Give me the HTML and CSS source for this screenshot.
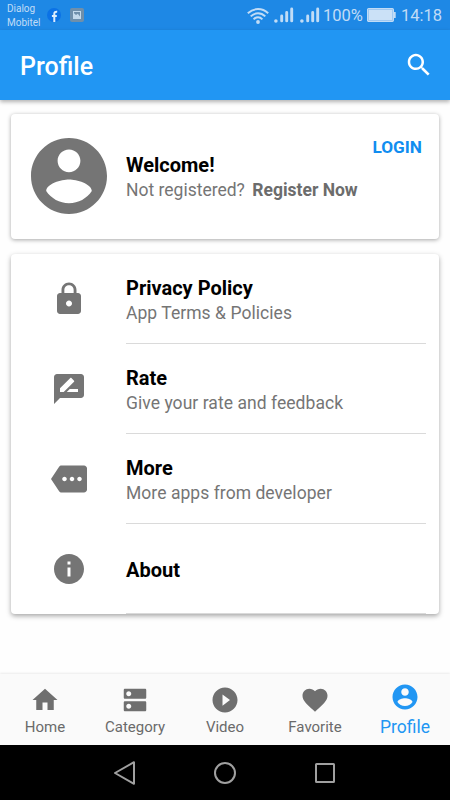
FILE: index.html
```html
<!DOCTYPE html>
<html lang="en">
<head>
    <meta charset="UTF-8">
    <meta name="viewport" content="width=device-width, initial-scale=1.0">
    <title>Profile</title>
    <link rel="stylesheet" href="styles.css">
</head>
<body>

<div class="status-bar">
    <div class="carrier">Dialog<br>Mobitel</div>
    <svg class="status-fb" viewBox="0 0 14 14">
        <circle cx="7" cy="7" r="7" fill="#0b72e6"/>
        <path d="M7.3 14V5.800Q7.300 3.500 10.200 3.800M4.900 8.100h4.900" fill="none" stroke="#dcecfc" stroke-width="2"/>
    </svg>
    <svg class="status-pic" viewBox="0 0 14 14">
        <rect width="14" height="14" rx="2" fill="#6f8fab"/>
        <rect x="3" y="3" width="8" height="8" fill="#c3d9ec"/>
        <path d="M4 4h6v4.500L7.800 5.800 6 7 4 5.200z" fill="#6f8fab"/>
    </svg>
    <div class="status-right">
        <svg class="wifi" viewBox="0 0 22 17">
            <g fill="none" stroke="#c1dcf6" stroke-width="2">
                <path d="M.8 6.200Q5.400 2 11 2t10.200 4.200"/>
                <path d="M3.700 9.400Q7 6.200 11 6.200t7.300 3.200"/>
                <path d="M6.600 12.400Q8.600 10.300 11 10.300t4.400 2.100"/>
            </g>
            <circle cx="11" cy="15" r="1.900" fill="#c1dcf6"/>
        </svg>
        <svg class="signal" viewBox="0 0 20 16">
            <path d="M1.900 14v0" stroke="#c1dcf6" stroke-width="3.600" stroke-linecap="round"/>
            <path d="M7.700 13.900V9M12.700 13.900V5.500M17.700 13.900V1.900" stroke="#c1dcf6" stroke-width="2.900" stroke-linecap="round"/>
        </svg>
        <svg class="signal second" viewBox="0 0 20 16">
            <path d="M1.900 14v0" stroke="#c1dcf6" stroke-width="3.600" stroke-linecap="round"/>
            <path d="M7.700 13.900V9M12.700 13.900V5.500M17.700 13.900V1.900" stroke="#c1dcf6" stroke-width="2.900" stroke-linecap="round"/>
        </svg>
        <span class="percent">100%</span>
        <svg class="battery" viewBox="0 0 29 14">
            <rect x=".7" y=".7" width="25.600" height="12.600" rx="1" fill="#cbe1f7" stroke="#c1dcf6" stroke-width="1.400"/>
            <rect x="1.600" y="1.600" width="23.800" height="10.800" fill="none" stroke="#8fbff0" stroke-width=".7"/>
            <rect x="27" y="4" width="1.700" height="6" fill="#c1dcf6"/>
        </svg>
        <span class="time">14:18</span>
    </div>
</div>

<header class="app-bar">
    <h1>Profile</h1>
    <svg class="search" viewBox="0 0 24 24"><path d="M15.500 14h-.79l-.28-.27C15.410 12.590 16 11.110 16 9.500 16 5.910 13.090 3 9.500 3S3 5.910 3 9.500 5.910 16 9.500 16c1.610 0 3.090-.59 4.230-1.570l.27.28v.79l5 4.990L20.490 19l-4.990-5zm-6 0C7.010 14 5 11.990 5 9.500S7.010 5 9.500 5 14 7.010 14 9.500 11.990 14 9.500 14z"/></svg>
</header>

<main>
    <!-- User card -->
    <section class="card user-card">
        <div class="avatar">
            <svg viewBox="2 2 20 20"><path d="M12 2C6.480 2 2 6.480 2 12s4.480 10 10 10 10-4.480 10-10S17.520 2 12 2zm0 3c1.660 0 3 1.340 3 3s-1.340 3-3 3-3-1.340-3-3 1.340-3 3-3zm0 14.200c-2.500 0-4.710-1.280-6-3.220.03-1.990 4-3.080 6-3.080 1.990 0 5.970 1.090 6 3.080-1.290 1.940-3.500 3.220-6 3.220z"/></svg>
        </div>
        <div class="text">
            <h2>Welcome!</h2>
            <p>Not registered? <b>Register Now</b></p>
        </div>
        <a class="login">LOGIN</a>
    </section>

    <!-- Menu -->
    <section class="card menu">
        <div class="row">
            <div class="row-icon"><svg viewBox="0 0 24 24"><path d="M18 8h-1V6c0-2.760-2.240-5-5-5S7 3.240 7 6v2H6c-1.100 0-2 .9-2 2v10c0 1.100.9 2 2 2h12c1.100 0 2-.9 2-2V10c0-1.100-.9-2-2-2zm-6 9c-1.100 0-2-.9-2-2s.9-2 2-2 2 .9 2 2-.9 2-2 2zm3.100-9H8.900V6c0-1.710 1.390-3.100 3.100-3.100 1.710 0 3.100 1.390 3.100 3.100v2z"/></svg></div>
            <div class="text">
                <h2>Privacy Policy</h2>
                <p>App Terms &amp; Policies</p>
            </div>
        </div>
        <div class="row">
            <div class="row-icon"><svg viewBox="0 0 24 24"><path d="M20 2H4c-1.100 0-1.990.9-1.990 2L2 22l4-4h14c1.100 0 2-.9 2-2V4c0-1.100-.9-2-2-2zM6 14v-2.470l6.880-6.880c.2-.2.51-.2.71 0l1.770 1.770c.2.2.2.51 0 .71L8.470 14H6zm12 0h-7.500l2-2H18v2z"/></svg></div>
            <div class="text">
                <h2>Rate</h2>
                <p>Give your rate and feedback</p>
            </div>
        </div>
        <div class="row">
            <div class="row-icon"><svg viewBox="0 0 24 24"><path d="M22 3H7c-.69 0-1.230.35-1.590.88L0 12l5.410 8.110c.36.53.97.89 1.660.89H22c1.100 0 2-.9 2-2V5c0-1.100-.9-2-2-2zM9 13.500c-.83 0-1.500-.67-1.500-1.500s.67-1.500 1.500-1.500 1.500.67 1.500 1.500-.67 1.500-1.500 1.500zm5 0c-.83 0-1.500-.67-1.500-1.500s.67-1.500 1.500-1.500 1.500.67 1.500 1.500-.67 1.500-1.500 1.500zm5 0c-.83 0-1.500-.67-1.500-1.500s.67-1.500 1.500-1.500 1.500.67 1.500 1.500-.67 1.500-1.500 1.500z"/></svg></div>
            <div class="text">
                <h2>More</h2>
                <p>More apps from developer</p>
            </div>
        </div>
        <div class="row">
            <div class="row-icon"><svg viewBox="0 0 24 24"><path d="M12 2C6.480 2 2 6.480 2 12s4.480 10 10 10 10-4.480 10-10S17.520 2 12 2zm1 15h-2v-6h2v6zm0-8h-2V7h2v2z"/></svg></div>
            <div class="text single">
                <h2>About</h2>
            </div>
        </div>
    </section>
</main>

<nav class="tabs">
    <a class="tab">
        <svg viewBox="0 0 24 24"><path d="M10 20v-6h4v6h5v-8h3L12 3 2 12h3v8z"/></svg>
        <span>Home</span>
    </a>
    <a class="tab">
        <svg viewBox="0 0 24 24"><path d="M20 13H4c-.55 0-1 .45-1 1v6c0 .55.45 1 1 1h16c.55 0 1-.45 1-1v-6c0-.55-.45-1-1-1zM7 19c-1.100 0-2-.9-2-2s.9-2 2-2 2 .9 2 2-.9 2-2 2zM20 3H4c-.55 0-1 .45-1 1v6c0 .55.45 1 1 1h16c.55 0 1-.45 1-1V4c0-.55-.45-1-1-1zM7 9c-1.100 0-2-.9-2-2s.9-2 2-2 2 .9 2 2-.9 2-2 2z"/></svg>
        <span>Category</span>
    </a>
    <a class="tab">
        <svg viewBox="0 0 24 24"><path d="M12 2C6.480 2 2 6.480 2 12s4.480 10 10 10 10-4.480 10-10S17.520 2 12 2zm-2 14.500v-9l6 4.500-6 4.500z"/></svg>
        <span>Video</span>
    </a>
    <a class="tab">
        <svg viewBox="0 0 24 24"><path d="M12 21.350l-1.450-1.320C5.400 15.360 2 12.280 2 8.500 2 5.420 4.420 3 7.500 3c1.740 0 3.410.81 4.500 2.090C13.090 3.810 14.760 3 16.500 3 19.580 3 22 5.420 22 8.500c0 3.780-3.400 6.860-8.550 11.540L12 21.350z"/></svg>
        <span>Favorite</span>
    </a>
    <a class="tab active">
        <svg viewBox="0 0 24 24"><path d="M12 2C6.480 2 2 6.480 2 12s4.480 10 10 10 10-4.480 10-10S17.520 2 12 2zm0 3c1.660 0 3 1.340 3 3s-1.340 3-3 3-3-1.340-3-3 1.340-3 3-3zm0 14.200c-2.500 0-4.710-1.280-6-3.220.03-1.990 4-3.080 6-3.080 1.990 0 5.970 1.090 6 3.080-1.290 1.940-3.500 3.220-6 3.220z"/></svg>
        <span>Profile</span>
    </a>
</nav>

<div class="system-nav">
    <svg viewBox="0 0 24 24"><path d="M21 1.200v21.600L2 12z"/></svg>
    <svg viewBox="0 0 24 24"><circle cx="12" cy="12" r="10"/></svg>
    <svg viewBox="0 0 24 24"><rect x="3" y="3" width="18" height="18" rx=".5"/></svg>
</div>

</body>
</html>
```
FILE: styles.css
```css
* {
    box-sizing: border-box;
}
body {
    margin: 0;
    height: 800px;
    display: flex;
    flex-direction: column;
    font-family: Roboto, sans-serif;
    background-color: #fefefe;
    overflow: hidden;
}
h1, h2, p {
    margin: 0;
}
svg {
    display: block;
    flex: none;
}
.status-bar {
    height: 30px;
    flex: none;
    display: flex;
    align-items: center;
    padding: 0 8px 0 7px;
    background-color: #1e88e5;
    color: #c1dcf6;
}
.carrier {
    width: 40px;
    font-size: 10px;
    line-height: 14px;
    padding-top: 1px;
}
.status-fb {
    width: 14px;
    height: 14px;
}
.status-pic {
    width: 14px;
    height: 14px;
    margin-left: 9px;
}
.status-right {
    margin-left: auto;
    display: flex;
    align-items: center;
}
.wifi {
    width: 22px;
    height: 17px;
}
.signal {
    width: 20px;
    height: 16px;
    margin-left: 5px;
}
.signal.second {
    margin-left: 6px;
}
.percent {
    width: 40px;
    margin-left: 3px;
    font-size: 16.5px;
    line-height: 30px;
    padding-top: 1px;
}
.battery {
    width: 29px;
    height: 14px;
    margin-left: 4px;
}
.time {
    width: 41px;
    margin-left: 5px;
    font-size: 16.5px;
    line-height: 30px;
    padding-top: 1px;
}
.app-bar {
    height: 70px;
    flex: none;
    display: flex;
    align-items: center;
    justify-content: space-between;
    padding: 0 16px 0 20px;
    background-color: #2196f3;
    color: #fff;
    box-shadow: 0 2px 4px rgba(0, 0, 0, 0.3);
}
.app-bar h1 {
    font-size: 25px;
    font-weight: 500;
    line-height: 30px;
    padding-top: 3px;
}
.search {
    width: 30px;
    height: 30px;
    fill: #fff;
}
main {
    flex: 1;
    display: flex;
    flex-direction: column;
    gap: 15px;
    padding: 14px 11px 0;
}
.card {
    background-color: #fff;
    border-radius: 4px;
    box-shadow: 0 1px 4px rgba(0, 0, 0, 0.35);
}
.menu.card {
    box-shadow: 0 2px 5px rgba(0, 0, 0, 0.35);
}
.user-card {
    height: 125px;
    display: flex;
}
.avatar {
    width: 115px;
    padding: 24px 0 0 20px;
}
.avatar svg {
    width: 76px;
    height: 76px;
    fill: #757575;
}
.text h2 {
    font-size: 20px;
    font-weight: 700;
    line-height: 26px;
    color: #000;
}
.text p {
    font-size: 17.5px;
    line-height: 24px;
    color: #757575;
    white-space: nowrap;
}
.row .text p {
    letter-spacing: 0.05px;
}
.text b {
    margin-left: 3px;
    font-weight: 700;
    color: #6c6c6c;
}
.user-card .text {
    padding-top: 38px;
}
.login {
    margin: 21px 17px 0 auto;
    font-size: 17.2px;
    font-weight: 700;
    line-height: 24px;
    color: #118df0;
}
.menu {
    height: 360px;
}
.row {
    height: 90px;
    display: flex;
    padding-right: 13px;
}
.row-icon {
    width: 115px;
    padding: 27px 0 0 40px;
}
.row-icon svg {
    width: 36px;
    height: 36px;
    fill: #757575;
}
.row .text {
    flex: 1;
    padding-top: 21px;
    border-bottom: 1px solid #dadada;
}
.row .single {
    padding-top: 33px;
}
.tabs {
    height: 71px;
    flex: none;
    display: flex;
    background-color: #fafafa;
    box-shadow: 0 -1px 2px rgba(0, 0, 0, 0.08);
}
.tab {
    flex: 1;
    display: flex;
    flex-direction: column;
    align-items: center;
    padding-top: 11px;
    color: #6a6a6a;
    font-size: 15px;
}
.tab svg {
    width: 30px;
    height: 30px;
    fill: #6f6f6f;
}
.tab span {
    line-height: 20px;
    margin-top: 2px;
}
.tab.active {
    padding-top: 8px;
    font-size: 17.5px;
    color: #2196f3;
}
.tab.active svg {
    fill: #2196f3;
}
.tab.active span {
    margin-top: 5px;
}
.system-nav {
    height: 55px;
    flex: none;
    display: flex;
    align-items: center;
    justify-content: center;
    gap: 76px;
    background-color: #000;
}
.system-nav svg {
    width: 24px;
    height: 24px;
    fill: none;
    stroke: #a0a0a0;
    stroke-width: 2;
    stroke-linejoin: round;
}
```
